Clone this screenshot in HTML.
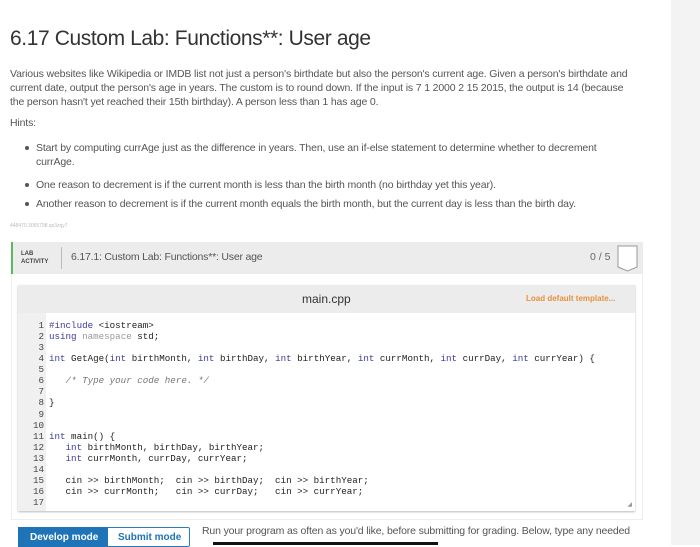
<!DOCTYPE html>
<html><head><style>
*{margin:0;padding:0;box-sizing:border-box}
body{width:700px;height:545px;overflow:hidden;background:#fff;font-family:"Liberation Sans",sans-serif;color:#555;position:relative}
.side{position:absolute;left:671px;top:0;width:29px;height:545px;background:#f3f3f3}
.abs{position:absolute;white-space:nowrap}
h1{position:absolute;left:10px;top:27px;font-size:21px;font-weight:normal;color:#333;letter-spacing:-0.4px;white-space:nowrap}
.p{font-size:10.5px;letter-spacing:-0.15px;line-height:14px;color:#555}
.dot{position:absolute;width:4px;height:4px;border-radius:50%;background:#555}
.lab{position:absolute;left:11px;top:242px;width:632px;height:32px;background:#ececec;border-left:2px solid #5cb85c}
.card{position:absolute;left:11px;top:274px;width:632px;height:246px;border:1px solid #eee;border-top:none}
.ed{position:absolute;left:18px;top:285px;width:617px;height:226px;box-shadow:0 1px 2px #bbb}
.edh{height:28px;background:#ececec;position:relative}
.code{position:absolute;left:0;top:28px;width:617px;height:198px;background:#fff}
.gut{position:absolute;left:0;top:0;width:28px;height:198px;background:#f0f0f0}
pre{position:absolute;top:35px;left:0;font-family:"Liberation Mono",monospace;font-size:9.2px;line-height:11.06px;color:#222}
.ln{width:24px;text-align:right;color:#444}
.k{color:#3a3a9a}.c{color:#777;font-style:italic}.g{color:#999}
</style></head><body>
<div class="side"></div>
<h1>6.17 Custom Lab: Functions**: User age</h1>
<div class="abs p" style="left:10px;top:67px">Various websites like Wikipedia or IMDB list not just a person's birthdate but also the person's current age. Given a person's birthdate and<br>current date, output the person's age in years. The custom is to round down. If the input is 7 1 2000 2 15 2015, the output is 14 (because<br>the person hasn't yet reached their 15th birthday). A person less than 1 has age 0.</div>
<div class="abs p" style="left:10px;top:116px">Hints:</div>
<div class="dot" style="left:25px;top:146px"></div>
<div class="abs p" style="left:36px;top:141px">Start by computing currAge just as the difference in years. Then, use an if-else statement to determine whether to decrement<br>currAge.</div>
<div class="dot" style="left:25px;top:183px"></div>
<div class="abs p" style="left:36px;top:178px">One reason to decrement is if the current month is less than the birth month (no birthday yet this year).</div>
<div class="dot" style="left:25px;top:202px"></div>
<div class="abs p" style="left:36px;top:197px">Another reason to decrement is if the current month equals the birth month, but the current day is less than the birth day.</div>
<div class="abs" style="left:10px;top:223px;font-size:5px;color:#bbb">448470.3065798.qx3zqy7</div>
<div class="card"></div>
<div class="lab">
 <div class="abs" style="left:8px;top:8px;font-size:6px;font-weight:bold;color:#444;line-height:8px">LAB<br>ACTIVITY</div>
 <div class="abs" style="left:48px;top:5px;width:1px;height:22px;background:#bbb"></div>
 <div class="abs" style="left:58px;top:9px;font-size:10.5px;color:#555;letter-spacing:-0.2px">6.17.1: Custom Lab: Functions**: User age</div>
 <div class="abs" style="left:577px;top:9px;font-size:10.5px;color:#666">0 / 5</div>
 <svg class="abs" style="left:604px;top:3px" width="22" height="27"><path d="M1 1H20V22L10.5 26L1 22Z" fill="#fff" stroke="#999"/></svg>
</div>
<div class="ed">
 <div class="edh">
  <div class="abs" style="left:284px;top:7px;font-size:12px;color:#333">main.cpp</div>
  <div class="abs" style="left:508px;top:9px;font-size:8px;font-weight:bold;color:#e8913a">Load default template...</div>
 </div>
 <div class="code"><div class="gut"></div>
  <div class="abs" style="right:3px;bottom:3px;font-size:6px;color:#999">◢</div>
 </div>
 <pre style="left:2px" class="ln">1
2
3
4
5
6
7
8
9
10
11
12
13
14
15
16
17</pre>
 <pre style="left:31px"><span class="k">#include</span> &lt;iostream&gt;
<span class="k">using</span> <span class="g">namespace</span> std;

<span class="k">int</span> GetAge(<span class="k">int</span> birthMonth, <span class="k">int</span> birthDay, <span class="k">int</span> birthYear, <span class="k">int</span> currMonth, <span class="k">int</span> currDay, <span class="k">int</span> currYear) {

   <span class="c">/* Type your code here. */</span>

}


<span class="k">int</span> main() {
   <span class="k">int</span> birthMonth, birthDay, birthYear;
   <span class="k">int</span> currMonth, currDay, currYear;

   cin &gt;&gt; birthMonth;  cin &gt;&gt; birthDay;  cin &gt;&gt; birthYear;
   cin &gt;&gt; currMonth;   cin &gt;&gt; currDay;   cin &gt;&gt; currYear;
</pre>
</div>
<div class="abs" style="left:18px;top:527px;width:172px;height:20px;border:1px solid #2a7bc0;border-radius:2px"></div>
<div class="abs" style="left:18px;top:527px;width:90px;height:20px;background:#1f74b8;color:#fff;font-size:10px;font-weight:bold;padding:5px 0 0 12px">Develop mode</div>
<div class="abs" style="left:118px;top:532px;font-size:10px;font-weight:bold;color:#1f74b8">Submit mode</div>
<div class="abs p" style="left:202px;top:524px">Run your program as often as you'd like, before submitting for grading. Below, type any needed</div>
<div class="abs" style="left:213px;top:542px;width:225px;height:3px;background:#111"></div>
</body></html>
